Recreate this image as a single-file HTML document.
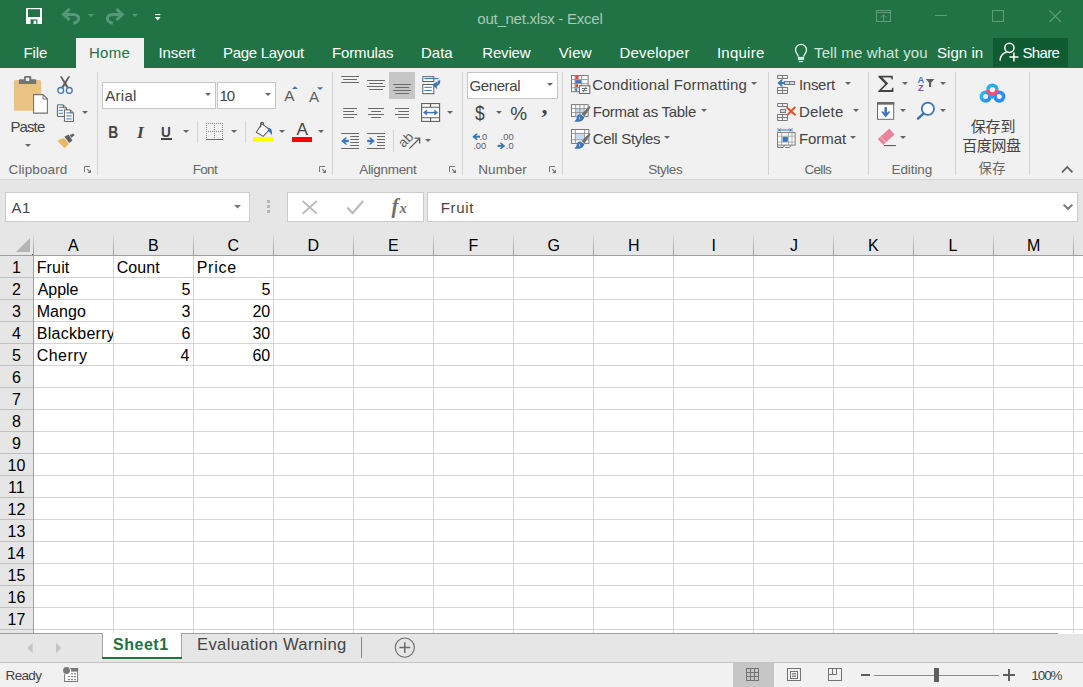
<!DOCTYPE html>
<html lang="en"><head><meta charset="utf-8"><title>out_net.xlsx - Excel</title>
<style>
html,body{margin:0;padding:0;}
body{width:1083px;height:687px;position:relative;overflow:hidden;background:#e6e6e6;font-family:"Liberation Sans", sans-serif;}
#app{position:absolute;left:0;top:0;width:1083px;height:687px;overflow:hidden;}
#app>div,#app>svg,#app>span{position:absolute;}
.t{white-space:pre;line-height:1;}
svg{overflow:visible;}
</style></head><body><div id="app">
<div style="left:0px;top:0px;width:1083px;height:68px;background:#217346;"></div>
<div style="left:76px;top:38px;width:68px;height:30px;background:#f1f1f1;"></div>
<div style="left:0px;top:68px;width:1083px;height:111px;background:#f1f1f1;"></div>
<div style="left:0px;top:179px;width:1083px;height:1px;background:#d6d6d6;"></div>
<div style="left:993px;top:38px;width:75px;height:29px;background:#0f5c32;"></div>
<span class="t" style="left:477.30px;top:11.20px;font-family:&quot;Liberation Sans&quot;, sans-serif;font-size:15px;font-weight:400;color:#a9c9b6;letter-spacing:-0.242px;">out_net.xlsx - Excel</span>
<span class="t" style="left:23.60px;top:45.40px;font-family:&quot;Liberation Sans&quot;, sans-serif;font-size:15px;font-weight:400;color:#fff;letter-spacing:-0.167px;">File</span>
<span class="t" style="left:88.90px;top:45.40px;font-family:&quot;Liberation Sans&quot;, sans-serif;font-size:15px;font-weight:400;color:#217346;letter-spacing:0.3px;">Home</span>
<span class="t" style="left:158.50px;top:45.40px;font-family:&quot;Liberation Sans&quot;, sans-serif;font-size:15px;font-weight:400;color:#fff;letter-spacing:-0.1px;">Insert</span>
<span class="t" style="left:223.00px;top:45.40px;font-family:&quot;Liberation Sans&quot;, sans-serif;font-size:15px;font-weight:400;color:#fff;letter-spacing:-0.3px;">Page Layout</span>
<span class="t" style="left:332.00px;top:45.40px;font-family:&quot;Liberation Sans&quot;, sans-serif;font-size:15px;font-weight:400;color:#fff;letter-spacing:-0.143px;">Formulas</span>
<span class="t" style="left:421.00px;top:45.40px;font-family:&quot;Liberation Sans&quot;, sans-serif;font-size:15px;font-weight:400;color:#fff;letter-spacing:0.0px;">Data</span>
<span class="t" style="left:482.30px;top:45.40px;font-family:&quot;Liberation Sans&quot;, sans-serif;font-size:15px;font-weight:400;color:#fff;letter-spacing:-0.18px;">Review</span>
<span class="t" style="left:558.70px;top:45.40px;font-family:&quot;Liberation Sans&quot;, sans-serif;font-size:15px;font-weight:400;color:#fff;letter-spacing:0.2px;">View</span>
<span class="t" style="left:619.50px;top:45.40px;font-family:&quot;Liberation Sans&quot;, sans-serif;font-size:15px;font-weight:400;color:#fff;letter-spacing:0.188px;">Developer</span>
<span class="t" style="left:716.90px;top:45.40px;font-family:&quot;Liberation Sans&quot;, sans-serif;font-size:15px;font-weight:400;color:#fff;letter-spacing:0.25px;">Inquire</span>
<span class="t" style="left:814.00px;top:45.40px;font-family:&quot;Liberation Sans&quot;, sans-serif;font-size:15px;font-weight:400;color:#d3e5da;letter-spacing:0.127px;">Tell me what you</span>
<span class="t" style="left:937.00px;top:45.40px;font-family:&quot;Liberation Sans&quot;, sans-serif;font-size:15px;font-weight:400;color:#fff;letter-spacing:0.05px;">Sign in</span>
<span class="t" style="left:1022.40px;top:45.40px;font-family:&quot;Liberation Sans&quot;, sans-serif;font-size:15px;font-weight:400;color:#fff;letter-spacing:-0.65px;">Share</span>
<div style="left:97px;top:72px;width:1px;height:103px;background:#d4d4d4;"></div>
<div style="left:332px;top:72px;width:1px;height:103px;background:#d4d4d4;"></div>
<div style="left:462px;top:72px;width:1px;height:103px;background:#d4d4d4;"></div>
<div style="left:562px;top:72px;width:1px;height:103px;background:#d4d4d4;"></div>
<div style="left:768px;top:72px;width:1px;height:103px;background:#d4d4d4;"></div>
<div style="left:868px;top:72px;width:1px;height:103px;background:#d4d4d4;"></div>
<div style="left:955px;top:72px;width:1px;height:103px;background:#d4d4d4;"></div>
<div style="left:1029px;top:72px;width:1px;height:103px;background:#d4d4d4;"></div>
<div style="left:197px;top:121px;width:1px;height:22px;background:#d4d4d4;"></div>
<div style="left:245px;top:121px;width:1px;height:22px;background:#d4d4d4;"></div>
<div style="left:393px;top:130px;width:1px;height:22px;background:#d4d4d4;"></div>
<span class="t" style="left:8.60px;top:162.70px;font-family:&quot;Liberation Sans&quot;, sans-serif;font-size:13.5px;font-weight:400;color:#666666;letter-spacing:0.112px;">Clipboard</span>
<span class="t" style="left:192.70px;top:162.70px;font-family:&quot;Liberation Sans&quot;, sans-serif;font-size:13.5px;font-weight:400;color:#666666;letter-spacing:-0.667px;">Font</span>
<span class="t" style="left:359.20px;top:162.70px;font-family:&quot;Liberation Sans&quot;, sans-serif;font-size:13.5px;font-weight:400;color:#666666;letter-spacing:-0.3px;">Alignment</span>
<span class="t" style="left:478.20px;top:162.70px;font-family:&quot;Liberation Sans&quot;, sans-serif;font-size:13.5px;font-weight:400;color:#666666;letter-spacing:0.12px;">Number</span>
<span class="t" style="left:648.20px;top:162.70px;font-family:&quot;Liberation Sans&quot;, sans-serif;font-size:13.5px;font-weight:400;color:#666666;letter-spacing:-0.46px;">Styles</span>
<span class="t" style="left:804.40px;top:162.70px;font-family:&quot;Liberation Sans&quot;, sans-serif;font-size:13.5px;font-weight:400;color:#666666;letter-spacing:-0.65px;">Cells</span>
<span class="t" style="left:891.60px;top:162.70px;font-family:&quot;Liberation Sans&quot;, sans-serif;font-size:13.5px;font-weight:400;color:#666666;letter-spacing:-0.117px;">Editing</span>
<span class="t" style="left:978.40px;top:162.40px;font-family:&quot;Liberation Sans&quot;, &quot;Noto Sans CJK SC&quot;, sans-serif;font-size:13.3px;font-weight:400;color:#666666;letter-spacing:0.5px;">保存</span>
<span class="t" style="left:10.40px;top:118.70px;font-family:&quot;Liberation Sans&quot;, sans-serif;font-size:15px;font-weight:400;color:#444444;letter-spacing:-0.875px;">Paste</span>
<div style="left:102px;top:82px;width:114px;height:27px;background:#fff;border:1px solid #c6c6c6;box-sizing:border-box;"></div>
<div style="left:217px;top:82px;width:59px;height:27px;background:#fff;border:1px solid #c6c6c6;box-sizing:border-box;"></div>
<span class="t" style="left:105.30px;top:87.90px;font-family:&quot;Liberation Sans&quot;, sans-serif;font-size:15px;font-weight:400;color:#444444;letter-spacing:0.275px;">Arial</span>
<span class="t" style="left:219.50px;top:87.90px;font-family:&quot;Liberation Sans&quot;, sans-serif;font-size:15px;font-weight:400;color:#444444;letter-spacing:-1.2px;">10</span>
<div style="left:467px;top:72px;width:91px;height:27px;background:#fff;border:1px solid #c6c6c6;box-sizing:border-box;"></div>
<span class="t" style="left:469.40px;top:77.50px;font-family:&quot;Liberation Sans&quot;, sans-serif;font-size:15px;font-weight:400;color:#444444;letter-spacing:-0.367px;">General</span>
<div style="left:389px;top:72px;width:26px;height:27px;background:#c6c6c6;"></div>
<span class="t" style="left:592.30px;top:76.80px;font-family:&quot;Liberation Sans&quot;, sans-serif;font-size:15px;font-weight:400;color:#444444;letter-spacing:0.176px;">Conditional Formatting</span>
<span class="t" style="left:592.80px;top:103.90px;font-family:&quot;Liberation Sans&quot;, sans-serif;font-size:15px;font-weight:400;color:#444444;letter-spacing:-0.271px;">Format as Table</span>
<span class="t" style="left:592.80px;top:130.70px;font-family:&quot;Liberation Sans&quot;, sans-serif;font-size:15px;font-weight:400;color:#444444;letter-spacing:-0.31px;">Cell Styles</span>
<span class="t" style="left:798.90px;top:76.80px;font-family:&quot;Liberation Sans&quot;, sans-serif;font-size:15px;font-weight:400;color:#444444;letter-spacing:-0.26px;">Insert</span>
<span class="t" style="left:798.90px;top:103.90px;font-family:&quot;Liberation Sans&quot;, sans-serif;font-size:15px;font-weight:400;color:#444444;letter-spacing:0.2px;">Delete</span>
<span class="t" style="left:798.90px;top:130.70px;font-family:&quot;Liberation Sans&quot;, sans-serif;font-size:15px;font-weight:400;color:#444444;letter-spacing:-0.04px;">Format</span>
<span class="t" style="left:970.70px;top:118.60px;font-family:&quot;Liberation Sans&quot;, &quot;Noto Sans CJK SC&quot;, sans-serif;font-size:15px;font-weight:400;color:#444444;letter-spacing:-0.1px;">保存到</span>
<span class="t" style="left:962.30px;top:138.30px;font-family:&quot;Liberation Sans&quot;, &quot;Noto Sans CJK SC&quot;, sans-serif;font-size:15px;font-weight:400;color:#444444;letter-spacing:-0.433px;">百度网盘</span>
<div style="left:5px;top:192px;width:245px;height:30px;background:#fff;border:1px solid #cbcbcb;box-sizing:border-box;"></div>
<span class="t" style="left:11.60px;top:200.20px;font-family:&quot;Liberation Sans&quot;, sans-serif;font-size:15px;font-weight:400;color:#444444;letter-spacing:0.3px;">A1</span>
<div style="left:287px;top:192px;width:137px;height:30px;background:#fff;border:1px solid #cbcbcb;box-sizing:border-box;"></div>
<div style="left:427px;top:192px;width:651px;height:30px;background:#fff;border:1px solid #cbcbcb;box-sizing:border-box;"></div>
<span class="t" style="left:440.70px;top:199.70px;font-family:&quot;Liberation Sans&quot;, sans-serif;font-size:15px;font-weight:400;color:#444444;letter-spacing:0.7px;">Fruit</span>
<div style="left:34px;top:256px;width:1049px;height:377px;background:#fff;"></div>
<div style="left:33px;top:234px;width:1px;height:21px;background:linear-gradient(#e2e2e2,#bdbdbd 45%,#9e9e9e);"></div>
<div style="left:113px;top:234px;width:1px;height:21px;background:linear-gradient(#e2e2e2,#bdbdbd 45%,#9e9e9e);"></div>
<div style="left:193px;top:234px;width:1px;height:21px;background:linear-gradient(#e2e2e2,#bdbdbd 45%,#9e9e9e);"></div>
<div style="left:273px;top:234px;width:1px;height:21px;background:linear-gradient(#e2e2e2,#bdbdbd 45%,#9e9e9e);"></div>
<div style="left:353px;top:234px;width:1px;height:21px;background:linear-gradient(#e2e2e2,#bdbdbd 45%,#9e9e9e);"></div>
<div style="left:433px;top:234px;width:1px;height:21px;background:linear-gradient(#e2e2e2,#bdbdbd 45%,#9e9e9e);"></div>
<div style="left:513px;top:234px;width:1px;height:21px;background:linear-gradient(#e2e2e2,#bdbdbd 45%,#9e9e9e);"></div>
<div style="left:593px;top:234px;width:1px;height:21px;background:linear-gradient(#e2e2e2,#bdbdbd 45%,#9e9e9e);"></div>
<div style="left:673px;top:234px;width:1px;height:21px;background:linear-gradient(#e2e2e2,#bdbdbd 45%,#9e9e9e);"></div>
<div style="left:753px;top:234px;width:1px;height:21px;background:linear-gradient(#e2e2e2,#bdbdbd 45%,#9e9e9e);"></div>
<div style="left:833px;top:234px;width:1px;height:21px;background:linear-gradient(#e2e2e2,#bdbdbd 45%,#9e9e9e);"></div>
<div style="left:913px;top:234px;width:1px;height:21px;background:linear-gradient(#e2e2e2,#bdbdbd 45%,#9e9e9e);"></div>
<div style="left:993px;top:234px;width:1px;height:21px;background:linear-gradient(#e2e2e2,#bdbdbd 45%,#9e9e9e);"></div>
<div style="left:1073px;top:234px;width:1px;height:21px;background:linear-gradient(#e2e2e2,#bdbdbd 45%,#9e9e9e);"></div>
<span class="t" style="left:68.00px;top:237.60px;font-family:&quot;Liberation Sans&quot;, sans-serif;font-size:16px;font-weight:400;color:#000;letter-spacing:0.0px;">A</span>
<span class="t" style="left:148.00px;top:237.60px;font-family:&quot;Liberation Sans&quot;, sans-serif;font-size:16px;font-weight:400;color:#000;letter-spacing:0.0px;">B</span>
<span class="t" style="left:227.50px;top:237.60px;font-family:&quot;Liberation Sans&quot;, sans-serif;font-size:16px;font-weight:400;color:#000;letter-spacing:0.0px;">C</span>
<span class="t" style="left:307.50px;top:237.60px;font-family:&quot;Liberation Sans&quot;, sans-serif;font-size:16px;font-weight:400;color:#000;letter-spacing:0.0px;">D</span>
<span class="t" style="left:388.00px;top:237.60px;font-family:&quot;Liberation Sans&quot;, sans-serif;font-size:16px;font-weight:400;color:#000;letter-spacing:0.0px;">E</span>
<span class="t" style="left:468.50px;top:237.60px;font-family:&quot;Liberation Sans&quot;, sans-serif;font-size:16px;font-weight:400;color:#000;letter-spacing:0.0px;">F</span>
<span class="t" style="left:547.50px;top:237.60px;font-family:&quot;Liberation Sans&quot;, sans-serif;font-size:16px;font-weight:400;color:#000;letter-spacing:0.0px;">G</span>
<span class="t" style="left:628.00px;top:237.60px;font-family:&quot;Liberation Sans&quot;, sans-serif;font-size:16px;font-weight:400;color:#000;letter-spacing:0.0px;">H</span>
<span class="t" style="left:711.50px;top:237.60px;font-family:&quot;Liberation Sans&quot;, sans-serif;font-size:16px;font-weight:400;color:#000;letter-spacing:0.0px;">I</span>
<span class="t" style="left:790.00px;top:237.60px;font-family:&quot;Liberation Sans&quot;, sans-serif;font-size:16px;font-weight:400;color:#000;letter-spacing:0.0px;">J</span>
<span class="t" style="left:868.00px;top:237.60px;font-family:&quot;Liberation Sans&quot;, sans-serif;font-size:16px;font-weight:400;color:#000;letter-spacing:0.0px;">K</span>
<span class="t" style="left:948.50px;top:237.60px;font-family:&quot;Liberation Sans&quot;, sans-serif;font-size:16px;font-weight:400;color:#000;letter-spacing:0.0px;">L</span>
<span class="t" style="left:1027.00px;top:237.60px;font-family:&quot;Liberation Sans&quot;, sans-serif;font-size:16px;font-weight:400;color:#000;letter-spacing:0.0px;">M</span>
<div style="left:0px;top:255px;width:1083px;height:1px;background:#9e9e9e;"></div>
<div style="left:33px;top:256px;width:1px;height:377px;background:#9e9e9e;"></div>
<div style="left:113px;top:256px;width:1px;height:377px;background:#d4d4d4;"></div>
<div style="left:193px;top:256px;width:1px;height:377px;background:#d4d4d4;"></div>
<div style="left:273px;top:256px;width:1px;height:377px;background:#d4d4d4;"></div>
<div style="left:353px;top:256px;width:1px;height:377px;background:#d4d4d4;"></div>
<div style="left:433px;top:256px;width:1px;height:377px;background:#d4d4d4;"></div>
<div style="left:513px;top:256px;width:1px;height:377px;background:#d4d4d4;"></div>
<div style="left:593px;top:256px;width:1px;height:377px;background:#d4d4d4;"></div>
<div style="left:673px;top:256px;width:1px;height:377px;background:#d4d4d4;"></div>
<div style="left:753px;top:256px;width:1px;height:377px;background:#d4d4d4;"></div>
<div style="left:833px;top:256px;width:1px;height:377px;background:#d4d4d4;"></div>
<div style="left:913px;top:256px;width:1px;height:377px;background:#d4d4d4;"></div>
<div style="left:993px;top:256px;width:1px;height:377px;background:#d4d4d4;"></div>
<div style="left:1073px;top:256px;width:1px;height:377px;background:#d4d4d4;"></div>
<div style="left:34px;top:277px;width:1049px;height:1px;background:#d4d4d4;"></div>
<div style="left:0px;top:277px;width:33px;height:1px;background:#c0c0c0;"></div>
<span class="t" style="left:12.00px;top:259.60px;font-family:&quot;Liberation Sans&quot;, sans-serif;font-size:16px;font-weight:400;color:#000;letter-spacing:0.0px;">1</span>
<div style="left:34px;top:299px;width:1049px;height:1px;background:#d4d4d4;"></div>
<div style="left:0px;top:299px;width:33px;height:1px;background:#c0c0c0;"></div>
<span class="t" style="left:12.00px;top:281.60px;font-family:&quot;Liberation Sans&quot;, sans-serif;font-size:16px;font-weight:400;color:#000;letter-spacing:0.0px;">2</span>
<div style="left:34px;top:321px;width:1049px;height:1px;background:#d4d4d4;"></div>
<div style="left:0px;top:321px;width:33px;height:1px;background:#c0c0c0;"></div>
<span class="t" style="left:12.00px;top:303.60px;font-family:&quot;Liberation Sans&quot;, sans-serif;font-size:16px;font-weight:400;color:#000;letter-spacing:0.0px;">3</span>
<div style="left:34px;top:343px;width:1049px;height:1px;background:#d4d4d4;"></div>
<div style="left:0px;top:343px;width:33px;height:1px;background:#c0c0c0;"></div>
<span class="t" style="left:12.00px;top:325.60px;font-family:&quot;Liberation Sans&quot;, sans-serif;font-size:16px;font-weight:400;color:#000;letter-spacing:0.0px;">4</span>
<div style="left:34px;top:365px;width:1049px;height:1px;background:#d4d4d4;"></div>
<div style="left:0px;top:365px;width:33px;height:1px;background:#c0c0c0;"></div>
<span class="t" style="left:12.00px;top:347.60px;font-family:&quot;Liberation Sans&quot;, sans-serif;font-size:16px;font-weight:400;color:#000;letter-spacing:0.0px;">5</span>
<div style="left:34px;top:387px;width:1049px;height:1px;background:#d4d4d4;"></div>
<div style="left:0px;top:387px;width:33px;height:1px;background:#c0c0c0;"></div>
<span class="t" style="left:12.00px;top:369.60px;font-family:&quot;Liberation Sans&quot;, sans-serif;font-size:16px;font-weight:400;color:#000;letter-spacing:0.0px;">6</span>
<div style="left:34px;top:409px;width:1049px;height:1px;background:#d4d4d4;"></div>
<div style="left:0px;top:409px;width:33px;height:1px;background:#c0c0c0;"></div>
<span class="t" style="left:12.00px;top:391.60px;font-family:&quot;Liberation Sans&quot;, sans-serif;font-size:16px;font-weight:400;color:#000;letter-spacing:0.0px;">7</span>
<div style="left:34px;top:431px;width:1049px;height:1px;background:#d4d4d4;"></div>
<div style="left:0px;top:431px;width:33px;height:1px;background:#c0c0c0;"></div>
<span class="t" style="left:12.00px;top:413.60px;font-family:&quot;Liberation Sans&quot;, sans-serif;font-size:16px;font-weight:400;color:#000;letter-spacing:0.0px;">8</span>
<div style="left:34px;top:453px;width:1049px;height:1px;background:#d4d4d4;"></div>
<div style="left:0px;top:453px;width:33px;height:1px;background:#c0c0c0;"></div>
<span class="t" style="left:12.00px;top:435.60px;font-family:&quot;Liberation Sans&quot;, sans-serif;font-size:16px;font-weight:400;color:#000;letter-spacing:0.0px;">9</span>
<div style="left:34px;top:475px;width:1049px;height:1px;background:#d4d4d4;"></div>
<div style="left:0px;top:475px;width:33px;height:1px;background:#c0c0c0;"></div>
<span class="t" style="left:7.50px;top:457.60px;font-family:&quot;Liberation Sans&quot;, sans-serif;font-size:16px;font-weight:400;color:#000;letter-spacing:0.0px;">10</span>
<div style="left:34px;top:497px;width:1049px;height:1px;background:#d4d4d4;"></div>
<div style="left:0px;top:497px;width:33px;height:1px;background:#c0c0c0;"></div>
<span class="t" style="left:8.00px;top:479.60px;font-family:&quot;Liberation Sans&quot;, sans-serif;font-size:16px;font-weight:400;color:#000;letter-spacing:0.0px;">11</span>
<div style="left:34px;top:519px;width:1049px;height:1px;background:#d4d4d4;"></div>
<div style="left:0px;top:519px;width:33px;height:1px;background:#c0c0c0;"></div>
<span class="t" style="left:7.50px;top:501.60px;font-family:&quot;Liberation Sans&quot;, sans-serif;font-size:16px;font-weight:400;color:#000;letter-spacing:0.0px;">12</span>
<div style="left:34px;top:541px;width:1049px;height:1px;background:#d4d4d4;"></div>
<div style="left:0px;top:541px;width:33px;height:1px;background:#c0c0c0;"></div>
<span class="t" style="left:7.50px;top:523.60px;font-family:&quot;Liberation Sans&quot;, sans-serif;font-size:16px;font-weight:400;color:#000;letter-spacing:0.0px;">13</span>
<div style="left:34px;top:563px;width:1049px;height:1px;background:#d4d4d4;"></div>
<div style="left:0px;top:563px;width:33px;height:1px;background:#c0c0c0;"></div>
<span class="t" style="left:7.00px;top:545.60px;font-family:&quot;Liberation Sans&quot;, sans-serif;font-size:16px;font-weight:400;color:#000;letter-spacing:0.0px;">14</span>
<div style="left:34px;top:585px;width:1049px;height:1px;background:#d4d4d4;"></div>
<div style="left:0px;top:585px;width:33px;height:1px;background:#c0c0c0;"></div>
<span class="t" style="left:7.50px;top:567.60px;font-family:&quot;Liberation Sans&quot;, sans-serif;font-size:16px;font-weight:400;color:#000;letter-spacing:0.0px;">15</span>
<div style="left:34px;top:607px;width:1049px;height:1px;background:#d4d4d4;"></div>
<div style="left:0px;top:607px;width:33px;height:1px;background:#c0c0c0;"></div>
<span class="t" style="left:7.50px;top:589.60px;font-family:&quot;Liberation Sans&quot;, sans-serif;font-size:16px;font-weight:400;color:#000;letter-spacing:0.0px;">16</span>
<div style="left:34px;top:629px;width:1049px;height:1px;background:#d4d4d4;"></div>
<div style="left:0px;top:629px;width:33px;height:1px;background:#c0c0c0;"></div>
<span class="t" style="left:7.50px;top:611.60px;font-family:&quot;Liberation Sans&quot;, sans-serif;font-size:16px;font-weight:400;color:#000;letter-spacing:0.0px;">17</span>
<div style="left:32px;top:254px;width:1px;height:1px;background:#217346;"></div>
<svg style="left:16px;top:238px" width="14" height="14" viewBox="0 0 14 14"><path d="M14 0V14H0z" fill="#b4b4b4"/></svg>
<span class="t" style="left:36.70px;top:259.60px;font-family:&quot;Liberation Sans&quot;, sans-serif;font-size:16px;font-weight:400;color:#000;letter-spacing:0.15px;">Fruit</span>
<span class="t" style="left:37.70px;top:281.60px;font-family:&quot;Liberation Sans&quot;, sans-serif;font-size:16px;font-weight:400;color:#000;letter-spacing:-0.05px;">Apple</span>
<span class="t" style="left:36.70px;top:303.60px;font-family:&quot;Liberation Sans&quot;, sans-serif;font-size:16px;font-weight:400;color:#000;letter-spacing:0.1px;">Mango</span>
<span class="t" style="left:36.70px;top:325.60px;font-family:&quot;Liberation Sans&quot;, sans-serif;font-size:16px;font-weight:400;color:#000;letter-spacing:0.278px;">Blackberry</span>
<span class="t" style="left:36.70px;top:347.60px;font-family:&quot;Liberation Sans&quot;, sans-serif;font-size:16px;font-weight:400;color:#000;letter-spacing:0.46px;">Cherry</span>
<div style="left:114px;top:322px;width:40px;height:21px;background:#fff;"></div>
<div style="left:113px;top:322px;width:1px;height:21px;background:#d4d4d4;"></div>
<span class="t" style="left:116.70px;top:259.60px;font-family:&quot;Liberation Sans&quot;, sans-serif;font-size:16px;font-weight:400;color:#000;letter-spacing:0.05px;">Count</span>
<span class="t" style="left:181.40px;top:281.60px;font-family:&quot;Liberation Sans&quot;, sans-serif;font-size:16px;font-weight:400;color:#000;letter-spacing:0.0px;">5</span>
<span class="t" style="left:181.40px;top:303.60px;font-family:&quot;Liberation Sans&quot;, sans-serif;font-size:16px;font-weight:400;color:#000;letter-spacing:0.0px;">3</span>
<span class="t" style="left:181.40px;top:325.60px;font-family:&quot;Liberation Sans&quot;, sans-serif;font-size:16px;font-weight:400;color:#000;letter-spacing:0.0px;">6</span>
<span class="t" style="left:180.40px;top:347.60px;font-family:&quot;Liberation Sans&quot;, sans-serif;font-size:16px;font-weight:400;color:#000;letter-spacing:0.0px;">4</span>
<span class="t" style="left:196.70px;top:259.60px;font-family:&quot;Liberation Sans&quot;, sans-serif;font-size:16px;font-weight:400;color:#000;letter-spacing:0.75px;">Price</span>
<span class="t" style="left:261.40px;top:281.60px;font-family:&quot;Liberation Sans&quot;, sans-serif;font-size:16px;font-weight:400;color:#000;letter-spacing:0.0px;">5</span>
<span class="t" style="left:252.40px;top:303.60px;font-family:&quot;Liberation Sans&quot;, sans-serif;font-size:16px;font-weight:400;color:#000;letter-spacing:0.0px;">20</span>
<span class="t" style="left:252.40px;top:325.60px;font-family:&quot;Liberation Sans&quot;, sans-serif;font-size:16px;font-weight:400;color:#000;letter-spacing:0.0px;">30</span>
<span class="t" style="left:252.40px;top:347.60px;font-family:&quot;Liberation Sans&quot;, sans-serif;font-size:16px;font-weight:400;color:#000;letter-spacing:0.0px;">60</span>
<div style="left:0px;top:633px;width:1083px;height:30px;background:#e6e6e6;"></div>
<div style="left:0px;top:633px;width:1058px;height:1px;background:#9f9f9f;"></div>
<div style="left:1058px;top:633px;width:25px;height:1px;background:#fff;"></div>
<div style="left:102px;top:633px;width:80px;height:24px;background:#fff;"></div>
<div style="left:102px;top:657px;width:80px;height:2px;background:#217346;"></div>
<div style="left:181px;top:633px;width:1px;height:24px;background:#a6a6a6;"></div>
<div style="left:102px;top:633px;width:1px;height:24px;background:#a6a6a6;"></div>
<span class="t" style="left:113.10px;top:636.60px;font-family:&quot;Liberation Sans&quot;, sans-serif;font-size:16px;font-weight:700;color:#217346;letter-spacing:0.5px;">Sheet1</span>
<span class="t" style="left:197.00px;top:637.20px;font-family:&quot;Liberation Sans&quot;, sans-serif;font-size:16.67px;font-weight:400;color:#444444;letter-spacing:0.318px;">Evaluation Warning</span>
<div style="left:361px;top:637px;width:1px;height:21px;background:#8a8a8a;"></div>
<div style="left:0px;top:662px;width:1083px;height:1px;background:#c3c3c3;"></div>
<div style="left:0px;top:663px;width:1083px;height:24px;background:#f1f1f1;"></div>
<div style="left:733px;top:663px;width:41px;height:24px;background:#c6c6c6;"></div>
<span class="t" style="left:5.60px;top:669.00px;font-family:&quot;Liberation Sans&quot;, sans-serif;font-size:13.5px;font-weight:400;color:#444444;letter-spacing:-0.675px;">Ready</span>
<span class="t" style="left:1031.20px;top:668.80px;font-family:&quot;Liberation Sans&quot;, sans-serif;font-size:13.5px;font-weight:400;color:#444444;letter-spacing:-1.033px;">100%</span>
<svg style="left:26px;top:8px" width="16" height="16" viewBox="0 0 16 16"><rect x="0" y="0" width="16" height="16" rx="0.8" fill="#fff"/><rect x="2" y="1.2" width="12" height="7.8" fill="#217346"/><rect x="4.6" y="11.4" width="6.8" height="4.6" fill="#217346"/><rect x="7.6" y="12.6" width="2.6" height="3.4" fill="#fff"/></svg>
<svg style="left:62px;top:8.4px" width="19" height="17" viewBox="0 0 19 17"><path d="M7.6 0.8L1.6 6.4L7.6 12" fill="none" stroke="#55997a" stroke-width="3"/><path d="M2.6 6.4H11C15 6.4 17.2 8.6 16.6 11.2C16.1 13.4 14.2 14.6 11.2 15.2" fill="none" stroke="#55997a" stroke-width="3"/></svg>
<svg style="left:87.0px;top:12.9px" width="8" height="5" viewBox="0 0 8 5"><path d="M1 1h6l-3.0 3z" fill="#55997a"/></svg>
<svg style="left:105.4px;top:8.4px" width="19" height="17" viewBox="0 0 19 17"><g transform="translate(19,0) scale(-1,1)"><path d="M7.6 0.8L1.6 6.4L7.6 12" fill="none" stroke="#55997a" stroke-width="3"/><path d="M2.6 6.4H11C15 6.4 17.2 8.6 16.6 11.2C16.1 13.4 14.2 14.6 11.2 15.2" fill="none" stroke="#55997a" stroke-width="3"/></g></svg>
<svg style="left:131.0px;top:12.9px" width="8" height="5" viewBox="0 0 8 5"><path d="M1 1h6l-3.0 3z" fill="#55997a"/></svg>
<svg style="left:154px;top:13px" width="8" height="9" viewBox="0 0 8 9"><rect x="1" y="1" width="5.4" height="1.1" fill="#fff"/><path d="M0.8 4h5.8l-2.9 3.4z" fill="#fff"/></svg>
<svg style="left:876px;top:9px" width="16" height="14" viewBox="0 0 16 14"><rect x="0.5" y="1.5" width="14" height="11" fill="none" stroke="#5f9c7b" stroke-width="1"/><path d="M0.5 3.5H14.5" stroke="#5f9c7b" stroke-width="1"/><path d="M7.5 12.4V6M4.6 8.8L7.5 5.8L10.4 8.8" fill="none" stroke="#5f9c7b" stroke-width="1"/></svg>
<div style="left:935px;top:15px;width:12px;height:1px;background:#5f9c7b;"></div>
<div style="left:992px;top:10px;width:12px;height:12px;border:1px solid #5f9c7b;box-sizing:border-box;"></div>
<svg style="left:1049px;top:10px" width="13" height="13" viewBox="0 0 13 13"><path d="M0.5 0.5L12 12M12 0.5L0.5 12" stroke="#5f9c7b" stroke-width="1.1"/></svg>
<svg style="left:794px;top:43px" width="14" height="20" viewBox="0 0 14 20"><path d="M4.3 13.6C4.2 11.6 1.5 10.2 1.5 6.9C1.5 3.7 4 1.4 7 1.4C10 1.4 12.5 3.7 12.5 6.9C12.5 10.2 9.8 11.6 9.7 13.6" fill="none" stroke="#e9f2ec" stroke-width="1.3"/><rect x="3.9" y="13.9" width="6.2" height="3" fill="#f4f8f5"/><rect x="3.9" y="15.1" width="6.2" height="0.5" fill="#8fbaa1"/><rect x="4.9" y="18.1" width="4.2" height="1" fill="#f4f8f5"/></svg>
<svg style="left:999px;top:42px" width="21" height="20" viewBox="0 0 21 20"><circle cx="10.4" cy="5.8" r="4.6" fill="none" stroke="#fff" stroke-width="1.5"/><path d="M1 18.6C1.4 14 4 11 7.6 10.3" fill="none" stroke="#fff" stroke-width="1.5"/><path d="M10.4 15H19.4M14.9 10.5V19.5" stroke="#fff" stroke-width="1.5"/></svg>
<svg style="left:13px;top:75px" width="36" height="40" viewBox="0 0 36 40"><rect x="0.9" y="4.9" width="27.3" height="30.9" rx="1.6" fill="#eac282"/><path d="M5.9 8.9V5.6C5.9 4.8 6.4 4.3 7.2 4.3H11.1V2.2C11.1 1.4 11.6 0.9 12.4 0.9H17C17.8 0.9 18.3 1.4 18.3 2.2V4.3H21.9C22.7 4.3 23.2 4.8 23.2 5.6V8.9Z" fill="#737373"/><rect x="12.9" y="2.7" width="3.4" height="3.2" fill="#f4f4f4"/><path d="M20.6 19.6H30L34.4 24V38.1H20.6Z" fill="#fff" stroke="#737373" stroke-width="1.1"/><path d="M30 19.6V24H34.4" fill="none" stroke="#737373" stroke-width="1"/></svg>
<svg style="left:24.0px;top:142.8px" width="8" height="5" viewBox="0 0 8 5"><path d="M1 1h6l-3.0 3z" fill="#666"/></svg>
<svg style="left:56px;top:76px" width="18" height="18" viewBox="0 0 18 18"><path d="M3.9 0.2L5.7 0.2L12.6 11L10.4 11.8Z" fill="#5e5e5e"/><path d="M14.1 0.2L12.3 0.2L5.4 11L7.6 11.8Z" fill="#5e5e5e"/><circle cx="4.7" cy="14.4" r="2.9" fill="none" stroke="#3c76b8" stroke-width="1.3"/><circle cx="13.3" cy="14.4" r="2.9" fill="none" stroke="#3c76b8" stroke-width="1.3"/></svg>
<svg style="left:56px;top:104px" width="19" height="19" viewBox="0 0 19 19"><path d="M1.4 0.9H7.4L10.4 3.9V12.4H1.4Z" fill="#fff" stroke="#5e5e5e" stroke-width="1"/><path d="M7.4 0.9V3.9H10.4" fill="none" stroke="#5e5e5e" stroke-width="1"/><path d="M8.4 5.9H14.4L17.4 8.9V17.4H8.4Z" fill="#fff" stroke="#5e5e5e" stroke-width="1"/><path d="M14.4 5.9V8.9H17.4" fill="none" stroke="#5e5e5e" stroke-width="1"/><rect x="2.8" y="2.8" width="4.2" height="1" fill="#3c76b8"/><rect x="2.8" y="5.8" width="4.2" height="1" fill="#3c76b8"/><rect x="2.8" y="8.8" width="4.2" height="1" fill="#3c76b8"/><rect x="10.2" y="8.4" width="5.5" height="1" fill="#3c76b8"/><rect x="10.2" y="11.4" width="5.5" height="1" fill="#3c76b8"/><rect x="10.2" y="14.4" width="5.5" height="1" fill="#3c76b8"/></svg>
<svg style="left:81.0px;top:110.0px" width="8" height="5" viewBox="0 0 8 5"><path d="M1 1h6l-3.0 3z" fill="#666"/></svg>
<svg style="left:57px;top:132px" width="19" height="18" viewBox="0 0 19 18"><path d="M0.4 8.8L7 5.8L12 12L7.4 16.2Z" fill="#eab765"/><path d="M7.4 4.8L11.6 2.4L15.4 8.5L12.3 11Z" fill="#5e5e5e"/><path d="M12.9 3.3L16 1.4L17.6 3.3L14.4 5.8Z" fill="#5e5e5e"/></svg>
<svg style="left:84px;top:166px" width="8" height="8" viewBox="0 0 8 8"><path d="M0.5 6V0.5H6" fill="none" stroke="#777" stroke-width="1"/><path d="M3.2 3.2L5.6 5.6" stroke="#777" stroke-width="1.2"/><path d="M7 3.4V7H3.4z" fill="#777"/></svg>
<svg style="left:204.0px;top:92.3px" width="8" height="5" viewBox="0 0 8 5"><path d="M1 1h6l-3.0 3z" fill="#666"/></svg>
<svg style="left:264.0px;top:92.3px" width="8" height="5" viewBox="0 0 8 5"><path d="M1 1h6l-3.0 3z" fill="#666"/></svg>
<span class="t" style="left:284.30px;top:87.60px;font-family:&quot;Liberation Sans&quot;, sans-serif;font-size:15.4px;font-weight:400;color:#5e5e5e;letter-spacing:0.0px;">A</span>
<svg style="left:292px;top:86px" width="7" height="5" viewBox="0 0 7 5"><path d="M0 3L3 0.2L6 3Z" fill="#3c76b8"/></svg>
<span class="t" style="left:309.10px;top:88.50px;font-family:&quot;Liberation Sans&quot;, sans-serif;font-size:15.2px;font-weight:400;color:#5e5e5e;letter-spacing:0.0px;">A</span>
<svg style="left:317px;top:86.8px" width="7" height="5" viewBox="0 0 7 5"><path d="M0 0.2H6.2L3.1 3Z" fill="#3c76b8"/></svg>
<span class="t" style="left:108.30px;top:124.70px;font-family:&quot;Liberation Sans&quot;, sans-serif;font-size:16px;font-weight:700;color:#444444;letter-spacing:0.0px;transform:scaleX(0.86);transform-origin:1px 0;">B</span>
<span class="t" style="left:137.00px;top:123.70px;font-family:&quot;Liberation Serif&quot;, serif;font-size:17.5px;font-weight:700;color:#444444;letter-spacing:0.0px;font-style:italic;">I</span>
<span class="t" style="left:160.50px;top:124.60px;font-family:&quot;Liberation Sans&quot;, sans-serif;font-size:14.6px;font-weight:700;color:#444444;letter-spacing:0.0px;transform:scaleX(0.93);transform-origin:1px 0;">U</span>
<div style="left:161px;top:138.4px;width:11px;height:1.2px;background:#444444;"></div>
<svg style="left:182.0px;top:128.8px" width="8" height="5" viewBox="0 0 8 5"><path d="M1 1h6l-3.0 3z" fill="#666"/></svg>
<svg style="left:206px;top:123px" width="17" height="17" viewBox="0 0 17 17"><rect x="0" y="0" width="1" height="1" fill="#8a8a8a"/><rect x="0" y="8" width="1" height="1" fill="#8a8a8a"/><rect x="0" y="0" width="1" height="1" fill="#8a8a8a"/><rect x="8" y="0" width="1" height="1" fill="#8a8a8a"/><rect x="16" y="0" width="1" height="1" fill="#8a8a8a"/><rect x="2" y="0" width="1" height="1" fill="#8a8a8a"/><rect x="2" y="8" width="1" height="1" fill="#8a8a8a"/><rect x="0" y="2" width="1" height="1" fill="#8a8a8a"/><rect x="8" y="2" width="1" height="1" fill="#8a8a8a"/><rect x="16" y="2" width="1" height="1" fill="#8a8a8a"/><rect x="4" y="0" width="1" height="1" fill="#8a8a8a"/><rect x="4" y="8" width="1" height="1" fill="#8a8a8a"/><rect x="0" y="4" width="1" height="1" fill="#8a8a8a"/><rect x="8" y="4" width="1" height="1" fill="#8a8a8a"/><rect x="16" y="4" width="1" height="1" fill="#8a8a8a"/><rect x="6" y="0" width="1" height="1" fill="#8a8a8a"/><rect x="6" y="8" width="1" height="1" fill="#8a8a8a"/><rect x="0" y="6" width="1" height="1" fill="#8a8a8a"/><rect x="8" y="6" width="1" height="1" fill="#8a8a8a"/><rect x="16" y="6" width="1" height="1" fill="#8a8a8a"/><rect x="8" y="0" width="1" height="1" fill="#8a8a8a"/><rect x="8" y="8" width="1" height="1" fill="#8a8a8a"/><rect x="0" y="8" width="1" height="1" fill="#8a8a8a"/><rect x="8" y="8" width="1" height="1" fill="#8a8a8a"/><rect x="16" y="8" width="1" height="1" fill="#8a8a8a"/><rect x="10" y="0" width="1" height="1" fill="#8a8a8a"/><rect x="10" y="8" width="1" height="1" fill="#8a8a8a"/><rect x="0" y="10" width="1" height="1" fill="#8a8a8a"/><rect x="8" y="10" width="1" height="1" fill="#8a8a8a"/><rect x="16" y="10" width="1" height="1" fill="#8a8a8a"/><rect x="12" y="0" width="1" height="1" fill="#8a8a8a"/><rect x="12" y="8" width="1" height="1" fill="#8a8a8a"/><rect x="0" y="12" width="1" height="1" fill="#8a8a8a"/><rect x="8" y="12" width="1" height="1" fill="#8a8a8a"/><rect x="16" y="12" width="1" height="1" fill="#8a8a8a"/><rect x="14" y="0" width="1" height="1" fill="#8a8a8a"/><rect x="14" y="8" width="1" height="1" fill="#8a8a8a"/><rect x="0" y="14" width="1" height="1" fill="#8a8a8a"/><rect x="8" y="14" width="1" height="1" fill="#8a8a8a"/><rect x="16" y="14" width="1" height="1" fill="#8a8a8a"/><rect x="16" y="0" width="1" height="1" fill="#8a8a8a"/><rect x="16" y="8" width="1" height="1" fill="#8a8a8a"/><rect x="0" y="16" width="1" height="1" fill="#8a8a8a"/><rect x="8" y="16" width="1" height="1" fill="#8a8a8a"/><rect x="16" y="16" width="1" height="1" fill="#8a8a8a"/><rect x="0" y="16" width="17" height="1" fill="#6a6a6a"/></svg>
<svg style="left:229.8px;top:129.2px" width="8" height="5" viewBox="0 0 8 5"><path d="M1 1h6l-3.0 3z" fill="#666"/></svg>
<svg style="left:253px;top:121px" width="21" height="22" viewBox="0 0 21 22"><rect x="0" y="16" width="20" height="4.7" fill="#ffff00"/><path d="M8.8 2.6L16.4 8.6L10.2 15.4L3.4 11.2Z" fill="#fff" stroke="#5e5e5e" stroke-width="1.1"/><path d="M7.6 6.2V2.6C7.6 0.9 10.6 0.9 10.6 2.6V4.2" fill="none" stroke="#5e5e5e" stroke-width="1.1"/><path d="M15.6 6.4C18.6 7.2 19.8 10.6 18.6 14.2C17.8 12.2 16.8 11 15 10.2Z" fill="#3c76b8"/></svg>
<svg style="left:277.8px;top:129.2px" width="8" height="5" viewBox="0 0 8 5"><path d="M1 1h6l-3.0 3z" fill="#666"/></svg>
<span class="t" style="left:296.40px;top:121.20px;font-family:&quot;Liberation Sans&quot;, sans-serif;font-size:17.2px;font-weight:400;color:#444444;letter-spacing:0.0px;">A</span>
<div style="left:292px;top:137px;width:20px;height:4.7px;background:#ff0000;"></div>
<svg style="left:316.7px;top:129.2px" width="8" height="5" viewBox="0 0 8 5"><path d="M1 1h6l-3.0 3z" fill="#666"/></svg>
<svg style="left:319px;top:166px" width="8" height="8" viewBox="0 0 8 8"><path d="M0.5 6V0.5H6" fill="none" stroke="#777" stroke-width="1"/><path d="M3.2 3.2L5.6 5.6" stroke="#777" stroke-width="1.2"/><path d="M7 3.4V7H3.4z" fill="#777"/></svg>
<svg style="left:341px;top:75px" width="19" height="9" viewBox="0 0 19 9"><rect x="0.2" y="1" width="17.8" height="1" fill="#6a6a6a"/><rect x="2.2" y="4" width="13.8" height="1" fill="#6a6a6a"/><rect x="0.2" y="7" width="17.8" height="1" fill="#6a6a6a"/></svg>
<svg style="left:367px;top:79px" width="19" height="12" viewBox="0 0 19 12"><rect x="0" y="1" width="18" height="1" fill="#6a6a6a"/><rect x="2.2" y="4" width="13.8" height="1" fill="#6a6a6a"/><rect x="0" y="7" width="18" height="1" fill="#6a6a6a"/><rect x="2.2" y="10" width="13.8" height="1" fill="#6a6a6a"/></svg>
<svg style="left:393px;top:84px" width="19" height="11" viewBox="0 0 19 11"><rect x="0.1" y="0" width="17.9" height="1" fill="#6a6a6a"/><rect x="2.2" y="3" width="13.8" height="1" fill="#6a6a6a"/><rect x="0.1" y="6" width="17.9" height="1" fill="#6a6a6a"/><rect x="2.2" y="9" width="13.8" height="1" fill="#6a6a6a"/></svg>
<svg style="left:422px;top:76px" width="20" height="19" viewBox="0 0 20 19"><rect x="0.8" y="0.7" width="11" height="4.8" fill="#fff" stroke="#5e5e5e" stroke-width="1"/><rect x="0.8" y="8.5" width="11" height="9.2" fill="#fff" stroke="#5e5e5e" stroke-width="1"/><rect x="2.4" y="10.8" width="7.4" height="1" fill="#3c76b8"/><rect x="2.4" y="14" width="7.4" height="1" fill="#3c76b8"/><path d="M2.4 2.6H16.4" fill="none" stroke="#3c76b8" stroke-width="1.1"/><path d="M17.2 4.4C17.6 7.6 15.6 9.2 13 9.2" fill="none" stroke="#3c76b8" stroke-width="2.2"/><path d="M15.4 5.8L10.6 8.8L14.8 12.4L14 9.1Z" fill="#3c76b8" stroke="#3c76b8" stroke-width="0.8" stroke-linejoin="round"/></svg>
<svg style="left:343px;top:107px" width="17" height="12" viewBox="0 0 17 12"><rect x="0.2" y="1" width="13.8" height="1" fill="#6a6a6a"/><rect x="0.2" y="4" width="10.8" height="1" fill="#6a6a6a"/><rect x="0.2" y="7" width="13.8" height="1" fill="#6a6a6a"/><rect x="0.2" y="10" width="10.8" height="1" fill="#6a6a6a"/></svg>
<svg style="left:367px;top:107px" width="19" height="12" viewBox="0 0 19 12"><rect x="1" y="1" width="16" height="1" fill="#6a6a6a"/><rect x="4.2" y="4" width="9.8" height="1" fill="#6a6a6a"/><rect x="1" y="7" width="16" height="1" fill="#6a6a6a"/><rect x="4.2" y="10" width="9.8" height="1" fill="#6a6a6a"/></svg>
<svg style="left:394px;top:107px" width="17" height="12" viewBox="0 0 17 12"><rect x="1" y="1" width="14" height="1" fill="#6a6a6a"/><rect x="4.3" y="4" width="10.7" height="1" fill="#6a6a6a"/><rect x="1" y="7" width="14" height="1" fill="#6a6a6a"/><rect x="4.3" y="10" width="10.7" height="1" fill="#6a6a6a"/></svg>
<svg style="left:421px;top:103px" width="20" height="19" viewBox="0 0 20 19"><rect x="0.6" y="0.6" width="18" height="17.8" fill="#fff" stroke="#5e5e5e" stroke-width="1.1"/><path d="M0.6 4.3H18.6M0.6 14.7H18.6M9.6 0.6V4.3M9.6 14.7V18.4" stroke="#5e5e5e" stroke-width="1.1" fill="none"/><path d="M4 9.6H15.2" stroke="#3c76b8" stroke-width="1.5"/><path d="M2.1 9.6L5.9 6.6V12.6ZM17.1 9.6L13.3 6.6V12.6Z" fill="#3c76b8"/><path d="M5.9 7.6L3.6 9.6L5.9 11.6M13.3 7.6L15.6 9.6L13.3 11.6" fill="none" stroke="#f1f6fc" stroke-width="0.01"/></svg>
<svg style="left:446.0px;top:110.0px" width="8" height="5" viewBox="0 0 8 5"><path d="M1 1h6l-3.0 3z" fill="#666"/></svg>
<svg style="left:341px;top:133px" width="19" height="17" viewBox="0 0 19 17"><rect x="0.2" y="0" width="17.8" height="1" fill="#6a6a6a"/><rect x="0.2" y="15" width="17.8" height="1" fill="#6a6a6a"/><rect x="9.2" y="3" width="8.8" height="1" fill="#6a6a6a"/><rect x="9.2" y="6" width="8.8" height="1" fill="#6a6a6a"/><rect x="9.2" y="9" width="8.8" height="1" fill="#6a6a6a"/><rect x="9.2" y="12" width="8.8" height="1" fill="#6a6a6a"/><path d="M2.4 8H7.8" stroke="#3c76b8" stroke-width="2.3"/><path d="M0.2 8L4.2 4.6H6.2L3.2 8L6.2 11.4H4.2Z" fill="#3c76b8"/></svg>
<svg style="left:367px;top:133px" width="19" height="17" viewBox="0 0 19 17"><rect x="0.2" y="0" width="17.8" height="1" fill="#6a6a6a"/><rect x="0.2" y="15" width="17.8" height="1" fill="#6a6a6a"/><rect x="10" y="3" width="8" height="1" fill="#6a6a6a"/><rect x="10" y="6" width="8" height="1" fill="#6a6a6a"/><rect x="10" y="9" width="8" height="1" fill="#6a6a6a"/><rect x="10" y="12" width="8" height="1" fill="#6a6a6a"/><g transform="translate(8,0) scale(-1,1)"><path d="M2.4 8H7.8" stroke="#3c76b8" stroke-width="2.3"/><path d="M0.2 8L4.2 4.6H6.2L3.2 8L6.2 11.4H4.2Z" fill="#3c76b8"/></g></svg>
<svg style="left:401px;top:131px" width="22" height="20" viewBox="0 0 22 20"><g transform="rotate(-45 7 8)"><text x="-2.6" y="11.4" font-family="Liberation Sans, sans-serif" font-size="13.4" fill="#5e5e5e">ab</text></g><path d="M8.3 17.6L18.4 7.5" stroke="#5e5e5e" stroke-width="1.3"/><path d="M13.6 7.2H18.7V12.4" fill="none" stroke="#5e5e5e" stroke-width="1.3"/></svg>
<svg style="left:424.0px;top:137.9px" width="8" height="5" viewBox="0 0 8 5"><path d="M1 1h6l-3.0 3z" fill="#666"/></svg>
<svg style="left:449px;top:166px" width="8" height="8" viewBox="0 0 8 8"><path d="M0.5 6V0.5H6" fill="none" stroke="#777" stroke-width="1"/><path d="M3.2 3.2L5.6 5.6" stroke="#777" stroke-width="1.2"/><path d="M7 3.4V7H3.4z" fill="#777"/></svg>
<svg style="left:546.0px;top:82.1px" width="8" height="5" viewBox="0 0 8 5"><path d="M1 1h6l-3.0 3z" fill="#666"/></svg>
<span class="t" style="left:475.20px;top:102.70px;font-family:&quot;Liberation Sans&quot;, sans-serif;font-size:20.5px;font-weight:400;color:#444444;letter-spacing:0.0px;transform:scaleX(0.85);transform-origin:0px 0;">$</span>
<svg style="left:495.0px;top:109.8px" width="8" height="5" viewBox="0 0 8 5"><path d="M1 1h6l-3.0 3z" fill="#666"/></svg>
<span class="t" style="left:510.30px;top:103.60px;font-family:&quot;Liberation Sans&quot;, sans-serif;font-size:19px;font-weight:400;color:#444444;letter-spacing:0.0px;">%</span>
<span class="t" style="left:541.40px;top:92.60px;font-family:&quot;Liberation Serif&quot;, serif;font-size:24px;font-weight:700;color:#444444;letter-spacing:0.0px;">,</span>
<svg style="left:472px;top:132px" width="17" height="18" viewBox="0 0 17 18"><path d="M2.6 4.7H8" stroke="#3c76b8" stroke-width="2.1"/><path d="M0.3 4.7L4.1 1.5H6L3.2 4.7L6 7.9H4.1Z" fill="#3c76b8"/><text x="7.4" y="7.6" font-family="Liberation Sans, sans-serif" font-size="9.4" fill="#5e5e5e">.0</text><text x="1.2" y="16.7" font-family="Liberation Sans, sans-serif" font-size="9.4" fill="#5e5e5e">.00</text></svg>
<svg style="left:497px;top:132px" width="18" height="18" viewBox="0 0 18 18"><text x="3.6" y="7.6" font-family="Liberation Sans, sans-serif" font-size="9.4" fill="#5e5e5e">.00</text><g transform="translate(8.6,9.2) scale(-1,1)"><path d="M2.6 4.7H8" stroke="#3c76b8" stroke-width="2.1"/><path d="M0.3 4.7L4.1 1.5H6L3.2 4.7L6 7.9H4.1Z" fill="#3c76b8"/></g><text x="8.8" y="16.7" font-family="Liberation Sans, sans-serif" font-size="9.4" fill="#5e5e5e">.0</text></svg>
<svg style="left:549px;top:166px" width="8" height="8" viewBox="0 0 8 8"><path d="M0.5 6V0.5H6" fill="none" stroke="#777" stroke-width="1"/><path d="M3.2 3.2L5.6 5.6" stroke="#777" stroke-width="1.2"/><path d="M7 3.4V7H3.4z" fill="#777"/></svg>
<svg style="left:571px;top:75px" width="20" height="19" viewBox="0 0 20 19"><rect x="0.5" y="0.5" width="16.6" height="16.2" fill="#fff" stroke="#7a7a7a" stroke-width="1"/><path d="M0.5 4.6H17M0.5 8.7H17M0.5 12.8H17M4 0.5V16.7M10.6 0.5V16.7" stroke="#8c8c8c" stroke-width="0.9" fill="none"/><rect x="4.4" y="1" width="3.2" height="3.2" fill="#d9532c"/><rect x="4.4" y="5.1" width="5.6" height="3.2" fill="#3c76b8"/><rect x="4.4" y="9.2" width="2.7" height="3.2" fill="#d9532c"/><rect x="4.4" y="13.3" width="1.8" height="3" fill="#3c76b8"/><rect x="8.4" y="10.8" width="10.4" height="7.6" fill="#fff" stroke="#5e5e5e" stroke-width="1"/><path d="M11 13.5H16.2M11 15.7H16.2M15 12L12.2 17.2" stroke="#5e5e5e" stroke-width="0.9" fill="none"/></svg>
<svg style="left:750.0px;top:81.2px" width="8" height="5" viewBox="0 0 8 5"><path d="M1 1h6l-3.0 3z" fill="#666"/></svg>
<svg style="left:571px;top:104px" width="22" height="19" viewBox="0 0 22 19"><rect x="0.5" y="0.6" width="16.6" height="12" fill="#fff" stroke="#7a7a7a" stroke-width="1"/><rect x="4.7" y="4.6" width="8.4" height="8" fill="#c5d9f1"/><path d="M0.5 4.6H17M0.5 8.6H17M4.7 0.6V12.6M8.9 0.6V12.6M13.1 0.6V12.6" stroke="#8c8c8c" stroke-width="0.9" fill="none"/><g transform="translate(-1.5,0)"><path d="M19.9 2L21 3.6L14.9 12.4L12 10.2Z" fill="#707070"/><path d="M12 10.2L14.9 12.4L14.1 13.4L11.2 11.2Z" fill="#f1f1f1"/><path d="M11.3 10.6C8.6 10 6.6 12 7.2 14.4C6.8 15.6 5.8 16.6 4.6 17.2C9 18.8 14 17.4 14.8 13Z" fill="#3c76b8"/><path d="M10.4 12.6C9.8 13.6 9.8 14.6 10.4 15.4" stroke="#dbe6f4" stroke-width="0.9" fill="none"/></g></svg>
<svg style="left:699.9px;top:108.0px" width="8" height="5" viewBox="0 0 8 5"><path d="M1 1h6l-3.0 3z" fill="#666"/></svg>
<svg style="left:571px;top:129px" width="22" height="21" viewBox="0 0 22 21"><rect x="0.5" y="0.5" width="17.4" height="13.9" fill="#fff" stroke="#7a7a7a" stroke-width="1"/><rect x="4.8" y="4.9" width="8.4" height="5.4" fill="#c5d9f1"/><path d="M0.5 4.4H17.9M0.5 10.8H17.9M4.3 0.5V14.4M13.6 0.5V14.4" stroke="#8c8c8c" stroke-width="0.9" fill="none"/><g transform="translate(-1.5,2)"><path d="M19.9 2L21 3.6L14.9 12.4L12 10.2Z" fill="#707070"/><path d="M12 10.2L14.9 12.4L14.1 13.4L11.2 11.2Z" fill="#f1f1f1"/><path d="M11.3 10.6C8.6 10 6.6 12 7.2 14.4C6.8 15.6 5.8 16.6 4.6 17.2C9 18.8 14 17.4 14.8 13Z" fill="#3c76b8"/><path d="M10.4 12.6C9.8 13.6 9.8 14.6 10.4 15.4" stroke="#dbe6f4" stroke-width="0.9" fill="none"/></g></svg>
<svg style="left:662.8px;top:134.8px" width="8" height="5" viewBox="0 0 8 5"><path d="M1 1h6l-3.0 3z" fill="#666"/></svg>
<svg style="left:776.5px;top:75px" width="20" height="19" viewBox="0 0 20 19"><path d="M0.5 0.5H10.5V3.5H0.5ZM5.5 0.5V3.5M0.5 12.5H10.5V18.5H0.5ZM0.5 15.5H10.5M5.5 12.5V18.5" fill="none" stroke="#7a7a7a" stroke-width="1"/><rect x="7.6" y="6.5" width="10" height="3" fill="#c5d9f1" stroke="#7a7a7a" stroke-width="1"/><path d="M12.6 6.5V9.5" stroke="#7a7a7a" stroke-width="1"/><path d="M2.6 8H8" stroke="#3c76b8" stroke-width="2.3"/><path d="M0.3 8L4.3 4.6H6.3L3.3 8L6.3 11.4H4.3Z" fill="#3c76b8"/></svg>
<svg style="left:843.5px;top:81.2px" width="8" height="5" viewBox="0 0 8 5"><path d="M1 1h6l-3.0 3z" fill="#666"/></svg>
<svg style="left:776.5px;top:102.5px" width="20" height="18" viewBox="0 0 20 18"><path d="M0.5 0.5H10.5V3.5H0.5ZM5.5 0.5V3.5M0.5 11.5H10.5V17.5H0.5ZM0.5 14.5H10.5M5.5 11.5V17.5" fill="none" stroke="#7a7a7a" stroke-width="1"/><rect x="3.5" y="6.5" width="5" height="3" fill="#c5d9f1" stroke="#7a7a7a" stroke-width="1"/><path d="M9.6 4.2L18.6 12.2M18.2 4L10 12.4" stroke="#d9532c" stroke-width="2"/></svg>
<svg style="left:851.8px;top:108.0px" width="8" height="5" viewBox="0 0 8 5"><path d="M1 1h6l-3.0 3z" fill="#666"/></svg>
<svg style="left:776.5px;top:127.5px" width="20" height="21" viewBox="0 0 20 21"><path d="M1.4 2H14.6" stroke="#3c76b8" stroke-width="1"/><path d="M0.9 0.4V3.6M15.1 0.4V3.6" stroke="#3c76b8" stroke-width="1" stroke-dasharray="1.2 0.8"/><path d="M3.6 0.6L1.8 2L3.6 3.4M12.4 0.6L14.2 2L12.4 3.4" fill="none" stroke="#3c76b8" stroke-width="0.9"/><rect x="0.5" y="4.6" width="17.6" height="12.5" fill="#fff" stroke="#7a7a7a" stroke-width="1"/><path d="M0.5 8.2H18.1M0.5 14.1H18.1M4.6 4.6V17.1M11.6 4.6V17.1M15 4.6V17.1" stroke="#a6a6a6" stroke-width="0.9" fill="none"/><rect x="5.5" y="8.8" width="5.3" height="5" fill="#3c76b8"/><path d="M0.5 17.1V19.5H6.2L7.8 17.1M8.3 19.5H12.6L14.2 17.1" fill="none" stroke="#7a7a7a" stroke-width="1"/></svg>
<svg style="left:848.9px;top:134.8px" width="8" height="5" viewBox="0 0 8 5"><path d="M1 1h6l-3.0 3z" fill="#666"/></svg>
<svg style="left:878px;top:75px" width="16" height="18" viewBox="0 0 16 18"><path d="M0.4 0.7H14.8V4.4H13.6L13 2.5H4.4L10.2 8.6L3.6 15.1H13.4L14.2 12.8H15.4V17.1H0.2V15.9L7.2 8.9L0.4 1.9Z" fill="#444444"/></svg>
<svg style="left:900.8px;top:81.2px" width="8" height="5" viewBox="0 0 8 5"><path d="M1 1h6l-3.0 3z" fill="#666"/></svg>
<svg style="left:877px;top:102px" width="18" height="18" viewBox="0 0 18 18"><rect x="0.5" y="0.5" width="16.2" height="16.8" fill="#fff" stroke="#6a6a6a" stroke-width="1"/><rect x="0" y="0" width="17.2" height="2.7" fill="#6a6a6a"/><path d="M8.7 5.2V12.4" stroke="#3c76b8" stroke-width="2.6"/><path d="M3.9 9.6H6.2L8.7 12.2L11.2 9.6H13.5L8.7 15.6Z" fill="#3c76b8"/></svg>
<svg style="left:899.0px;top:108.0px" width="8" height="5" viewBox="0 0 8 5"><path d="M1 1h6l-3.0 3z" fill="#666"/></svg>
<svg style="left:877px;top:128px" width="20" height="19" viewBox="0 0 20 19"><path d="M1.2 11L12.3 1.1L17.1 6.5L6.3 16.6Z" fill="#e8849a" stroke="#e8849a" stroke-width="0.8" stroke-linejoin="round"/><path d="M3.6 9L9 14.4" stroke="#f7d6dc" stroke-width="1"/><rect x="6.9" y="17" width="12" height="1.1" fill="#5e5e5e"/></svg>
<svg style="left:899.0px;top:134.8px" width="8" height="5" viewBox="0 0 8 5"><path d="M1 1h6l-3.0 3z" fill="#666"/></svg>
<svg style="left:917px;top:75px" width="19" height="18" viewBox="0 0 19 18"><text x="0.6" y="7.7" font-family="Liberation Sans, sans-serif" font-size="9.3" font-weight="700" fill="#3c76b8">A</text><text x="1" y="16" font-family="Liberation Sans, sans-serif" font-size="9.3" font-weight="700" fill="#8a4ea8">Z</text><path d="M8.8 4H17.4L14.1 7.8V11.9H12V7.8Z" fill="#5e5e5e"/></svg>
<svg style="left:939.0px;top:81.2px" width="8" height="5" viewBox="0 0 8 5"><path d="M1 1h6l-3.0 3z" fill="#666"/></svg>
<svg style="left:917px;top:102px" width="19" height="19" viewBox="0 0 19 19"><circle cx="10.9" cy="6.8" r="6.1" fill="#fff" stroke="#3c76b8" stroke-width="1.8"/><path d="M6.4 11.6L1 16.6" stroke="#3c76b8" stroke-width="2.5" stroke-linecap="round"/></svg>
<svg style="left:939.0px;top:108.0px" width="8" height="5" viewBox="0 0 8 5"><path d="M1 1h6l-3.0 3z" fill="#666"/></svg>
<svg style="left:1061px;top:164.5px" width="13" height="9" viewBox="0 0 13 9"><path d="M1 7.4L6.2 2L11.4 7.4" fill="none" stroke="#5e5e5e" stroke-width="1.7"/></svg>
<svg style="left:978px;top:82px" width="28" height="22" viewBox="0 0 28 22"><defs><linearGradient id="bd" x1="0" y1="0" x2="1" y2="0.4"><stop offset="0" stop-color="#1fc3f6"/><stop offset="1" stop-color="#2889f0"/></linearGradient></defs><circle cx="7.6" cy="14.6" r="4.3" fill="none" stroke="url(#bd)" stroke-width="3.6"/><path d="M17.3 13.2A4.3 4.3 0 1 0 19.6 10.7" fill="none" stroke="#2b8ef0" stroke-width="3.6" stroke-linecap="round"/><path d="M10.8 11.8L15.6 15.6" stroke="#22a8f3" stroke-width="3.4"/><path d="M9.9 7.7A4.5 4.5 0 0 1 18.9 7.7" fill="none" stroke="#20b1f4" stroke-width="3.6"/><path d="M9.9 7.5A4.5 4.5 0 0 0 18.9 7.5" fill="none" stroke="#f0506e" stroke-width="3.4"/></svg>
<svg style="left:232.8px;top:204.2px" width="9" height="5.6" viewBox="0 0 9 5.6"><path d="M1 1h7l-3.5 3.6z" fill="#777"/></svg>
<div style="left:267px;top:200px;width:3px;height:3px;background:#b6b6b6;"></div>
<div style="left:267px;top:205px;width:3px;height:3px;background:#b6b6b6;"></div>
<div style="left:267px;top:210px;width:3px;height:3px;background:#b6b6b6;"></div>
<svg style="left:301px;top:200px" width="18" height="16" viewBox="0 0 18 16"><path d="M1.6 1L15.8 13.8M15.8 1L1.6 13.8" stroke="#bcbcbc" stroke-width="1.9"/></svg>
<svg style="left:346px;top:200px" width="19" height="16" viewBox="0 0 19 16"><path d="M1.4 7.6L6.6 13L17.2 1" fill="none" stroke="#bcbcbc" stroke-width="2.3"/></svg>
<span class="t" style="left:391.60px;top:195.60px;font-family:&quot;Liberation Serif&quot;, serif;font-size:21px;font-weight:700;color:#707070;letter-spacing:0.0px;font-style:italic;">f</span>
<span class="t" style="left:399.60px;top:201.10px;font-family:&quot;Liberation Serif&quot;, serif;font-size:14.5px;font-weight:700;color:#707070;letter-spacing:0.0px;font-style:italic;">x</span>
<svg style="left:1061.5px;top:203px" width="13" height="9" viewBox="0 0 13 9"><path d="M1.6 1.6L6 5.8L10.4 1.6" fill="none" stroke="#777" stroke-width="2"/></svg>
<svg style="left:25.6px;top:641.6px" width="8" height="12" viewBox="0 0 8 12"><path d="M6.6 1V11L1.2 6Z" fill="#c2c2c2"/></svg>
<svg style="left:54.6px;top:641.6px" width="8" height="12" viewBox="0 0 8 12"><path d="M1 1V11L6.4 6Z" fill="#c2c2c2"/></svg>
<svg style="left:394px;top:637px" width="22" height="22" viewBox="0 0 22 22"><circle cx="10.8" cy="10.6" r="9.6" fill="none" stroke="#6a6a6a" stroke-width="1.1"/><path d="M5.4 10.6H16.2M10.8 5.2V16" stroke="#6a6a6a" stroke-width="1.5"/></svg>
<svg style="left:63px;top:666px" width="16" height="17" viewBox="0 0 16 17"><rect x="1.6" y="2.5" width="13" height="13" fill="#fff" stroke="#787878" stroke-width="1"/><rect x="8.1" y="2" width="7" height="3.6" fill="#787878"/><circle cx="3.5" cy="4.5" r="4.1" fill="#f4f4f4"/><circle cx="3.5" cy="4.5" r="3.4" fill="#787878"/><rect x="4.9" y="10.1" width="2" height="1.1" fill="#787878"/><rect x="4.9" y="13.1" width="2" height="1.1" fill="#787878"/><rect x="8" y="7.2" width="2" height="1.1" fill="#787878"/><rect x="8" y="10.1" width="2" height="1.1" fill="#787878"/><rect x="8" y="13.1" width="2" height="1.1" fill="#787878"/><rect x="11" y="7.2" width="2" height="1.1" fill="#787878"/><rect x="11" y="10.1" width="2" height="1.1" fill="#787878"/><rect x="11" y="13.1" width="2" height="1.1" fill="#787878"/></svg>
<svg style="left:746px;top:668px" width="14" height="14" viewBox="0 0 14 14"><rect x="0.5" y="0.5" width="12" height="12" fill="none" stroke="#737373" stroke-width="1"/><path d="M0.5 4.5H12.5M0.5 8.5H12.5M4.5 0.5V12.5M8.5 0.5V12.5" stroke="#737373" stroke-width="1"/></svg>
<svg style="left:787px;top:668px" width="16" height="14" viewBox="0 0 16 14"><rect x="0.5" y="0.5" width="13" height="12" fill="none" stroke="#737373" stroke-width="1"/><rect x="3.5" y="3.5" width="7" height="7" fill="none" stroke="#737373" stroke-width="1"/><path d="M5 5.5H9M5 7H9M5 8.5H9" stroke="#737373" stroke-width="0.8"/></svg>
<svg style="left:828px;top:668px" width="16" height="14" viewBox="0 0 16 14"><rect x="0.5" y="0.5" width="13" height="12" fill="none" stroke="#737373" stroke-width="1"/><path d="M0.5 6.5H8.5V0.5M4.5 0.5V6.5" fill="none" stroke="#737373" stroke-width="1"/></svg>
<div style="left:861px;top:674px;width:9px;height:2px;background:#5e5e5e;"></div>
<div style="left:874px;top:675px;width:125px;height:1px;background:#8a8a8a;"></div>
<div style="left:934px;top:668px;width:5px;height:14px;background:#5e5e5e;"></div>
<div style="left:1003px;top:674px;width:12px;height:2px;background:#5e5e5e;"></div>
<div style="left:1008px;top:669px;width:2px;height:12px;background:#5e5e5e;"></div>
</div></body></html>
